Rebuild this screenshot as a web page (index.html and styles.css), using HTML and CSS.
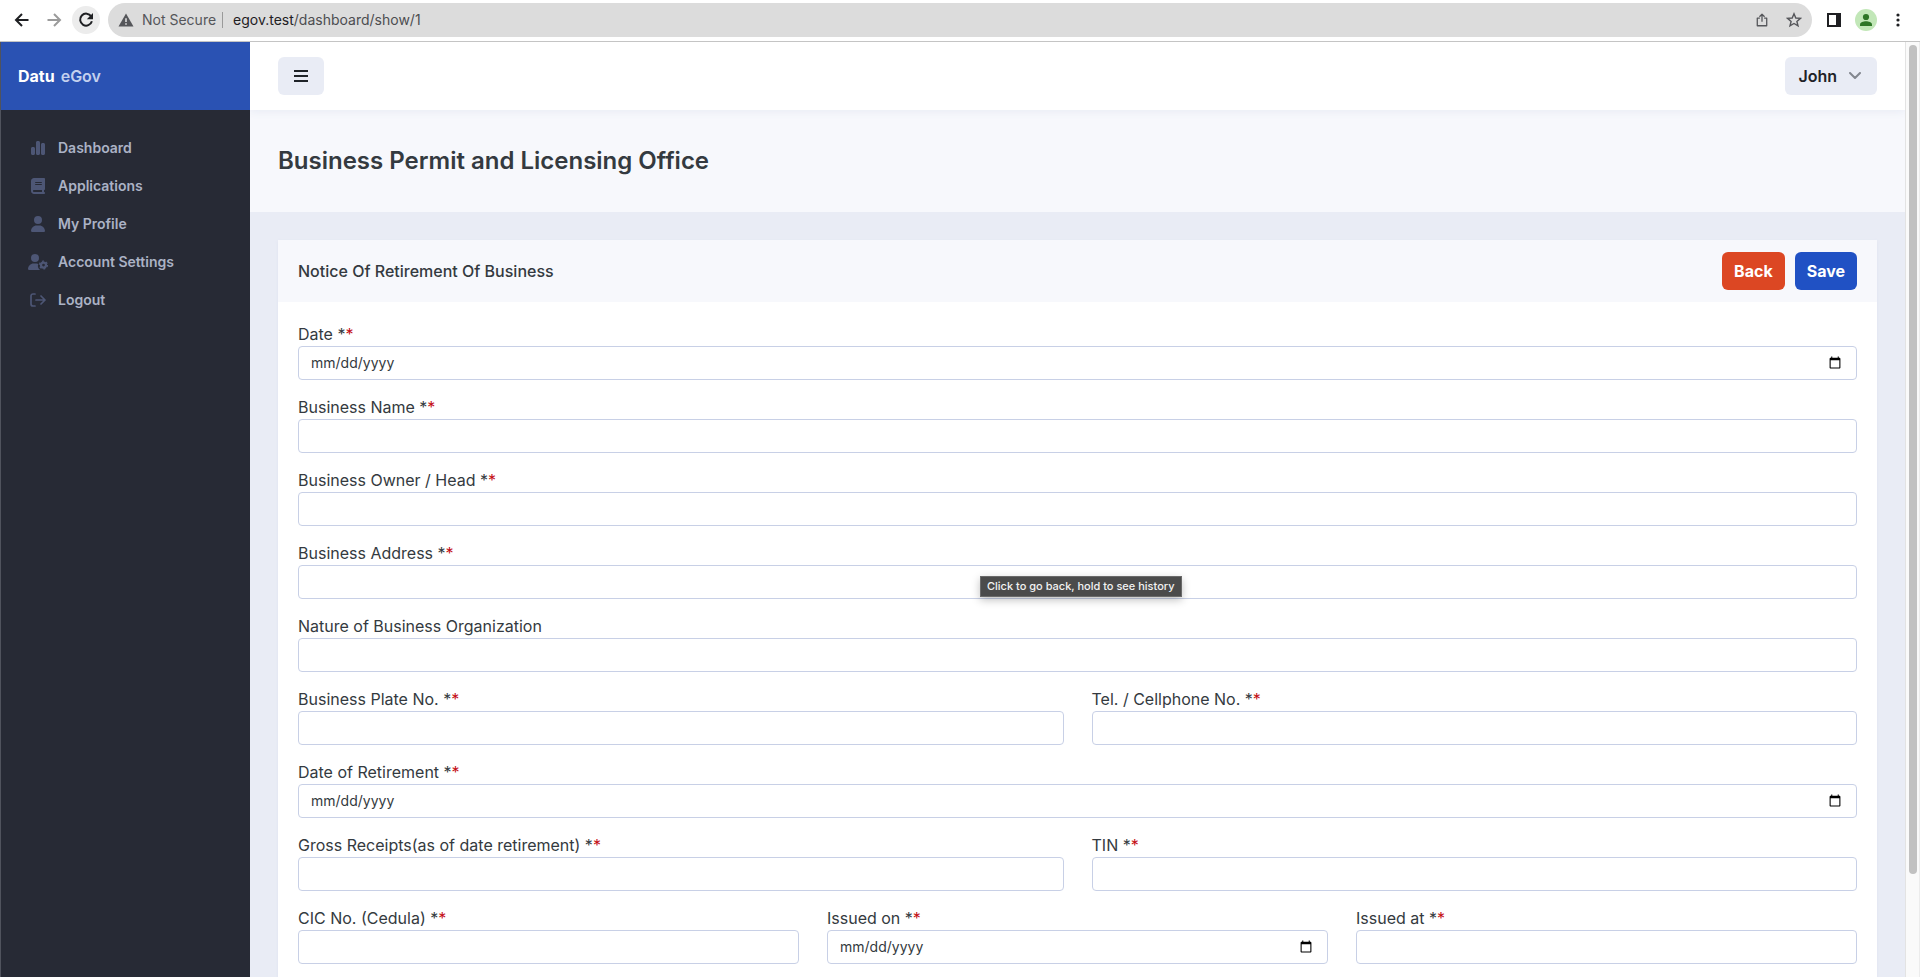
FILE: index.html
```html
<!DOCTYPE html>
<html lang="en">
<head>
<meta charset="utf-8">
<title>Datu eGov</title>
<link rel="stylesheet" href="styles.css">
</head>
<body>
<div class="browser-bar">
  <button class="nav-btn" aria-label="Back"><svg width="16" height="16" viewBox="0 0 16 16"><path d="M14.500 8H2M8 2L2 8l6 6" fill="none" stroke="#1f2023" stroke-width="2"/></svg></button>
  <button class="nav-btn" aria-label="Forward"><svg width="16" height="16" viewBox="0 0 16 16"><path d="M1.500 8H14M8 2l6 6-6 6" fill="none" stroke="#9b9b9b" stroke-width="2"/></svg></button>
  <button class="nav-btn nav-btn-hover" aria-label="Reload"><svg width="16" height="16" viewBox="0 0 16 16"><path d="M13.200 4.400A6 6 0 1 0 13.900 9.300" fill="none" stroke="#1f2023" stroke-width="2"/><path d="M15 1v6.200H8.800z" fill="#1f2023"/></svg></button>
  <div class="address">
    <svg width="16" height="14" viewBox="0 0 16 14"><path d="M8 .5L15.500 13.500H.5z" fill="#55565a"/><path d="M7.200 5.300h1.600v3.700H7.200zM7.200 10.200h1.600v1.600H7.200z" fill="#dcdcdc"/></svg>
    <span class="security">Not Secure</span>
    <span class="url"><span class="host">egov.test</span>/dashboard/show/1</span>
    <button class="bar-icon" aria-label="Share"><svg width="12" height="14" viewBox="0 0 14 16"><path d="M4.500 5.700H1.500v9h11V5.700H9.500M7 10V1.500M4 4.200l3-3 3 3" fill="none" stroke="#55565a" stroke-width="1.500" stroke-linejoin="round"/></svg></button>
    <button class="bar-icon" aria-label="Bookmark"><svg width="16" height="16" viewBox="0 0 16 16"><path d="M8 1.800l1.800 4.200 4.600.4-3.500 3 1.100 4.500L8 11.500l-4 2.400 1.100-4.500-3.500-3 4.600-.4z" fill="none" stroke="#55565a" stroke-width="1.400"/></svg></button>
  </div>
  <div class="bar-tools">
    <button class="bar-icon" aria-label="Side panel"><svg width="14" height="14" viewBox="0 0 14 14"><path d="M1 1h12v12H1z" fill="#fff" stroke="#1f2023" stroke-width="2"/><path d="M9 0h5v14H9z" fill="#1f2023"/></svg></button>
    <button class="bar-icon" aria-label="Profile"><svg width="22" height="22" viewBox="0 0 22 22"><circle cx="11" cy="11" r="11" fill="#c2e7b8"/><circle cx="11" cy="8" r="3.100" fill="#2e7626"/><path d="M5 17v-1.500c0-2.300 3.500-3.300 6-3.300s6 1 6 3.300V17z" fill="#2e7626"/></svg></button>
    <button class="bar-icon" aria-label="Menu"><svg width="16" height="16" viewBox="0 0 16 16" fill="#1f2023"><circle cx="8" cy="3" r="1.600"/><circle cx="8" cy="8" r="1.600"/><circle cx="8" cy="13" r="1.600"/></svg></button>
  </div>
</div>

<div class="app">
  <aside class="sidebar">
    <a class="brand" href="#"><span>Datu</span> <span class="brand-sub">eGov</span></a>
    <nav class="menu">
      <a href="#"><span class="menu-icon"><svg width="14" height="16" viewBox="0 0 448 512"><path d="M160 80c0-26.500 21.500-48 48-48h32c26.500 0 48 21.500 48 48V432c0 26.500-21.500 48-48 48H208c-26.500 0-48-21.500-48-48V80zM0 272c0-26.500 21.500-48 48-48H80c26.500 0 48 21.500 48 48V432c0 26.500-21.500 48-48 48H48c-26.500 0-48-21.500-48-48V272zM368 96h32c26.500 0 48 21.500 48 48V432c0 26.500-21.500 48-48 48H368c-26.500 0-48-21.500-48-48V144c0-26.500 21.500-48 48-48z"/></svg></span>Dashboard</a>
      <a href="#"><span class="menu-icon"><svg width="14" height="16" viewBox="0 0 448 512"><path d="M96 0C43 0 0 43 0 96V416c0 53 43 96 96 96H384h32c17.700 0 32-14.300 32-32s-14.300-32-32-32V384c17.700 0 32-14.300 32-32V32c0-17.700-14.300-32-32-32H384 96zm0 384H352v64H96c-17.700 0-32-14.300-32-32s14.300-32 32-32zm32-240c0-8.800 7.200-16 16-16H336c8.800 0 16 7.200 16 16s-7.200 16-16 16H144c-8.800 0-16-7.200-16-16zm16 48H336c8.800 0 16 7.200 16 16s-7.200 16-16 16H144c-8.800 0-16-7.200-16-16s7.200-16 16-16z"/></svg></span>Applications</a>
      <a href="#"><span class="menu-icon"><svg width="14" height="16" viewBox="0 0 448 512"><path d="M224 256A128 128 0 1 0 224 0a128 128 0 1 0 0 256zm-45.700 48C79.800 304 0 383.800 0 482.300C0 498.700 13.300 512 29.700 512H418.300c16.400 0 29.700-13.300 29.700-29.700C448 383.800 368.200 304 269.700 304H178.300z"/></svg></span>My Profile</a>
      <a href="#"><span class="menu-icon"><svg width="20" height="16" viewBox="0 0 640 512"><path d="M224 256A128 128 0 1 0 224 0a128 128 0 1 0 0 256zm-45.700 48C79.800 304 0 383.800 0 482.300C0 498.700 13.300 512 29.700 512H392c-30-22-62-60-72-100-8-36 0-72 18-92-20-10-44-16-68-16z"/><circle cx="496" cy="352" r="80" fill="none" stroke="#4d5675" stroke-width="72"/><circle cx="496" cy="352" r="124" fill="none" stroke="#4d5675" stroke-width="44" stroke-dasharray="65 65"/></svg></span>Account Settings</a>
      <a href="#"><span class="menu-icon"><svg width="16" height="16" viewBox="0 0 16 16"><path d="M5 2H3a2 2 0 0 0-2 2v8a2 2 0 0 0 2 2h2M6 8h9M11 4l4 4-4 4" fill="none" stroke="#4d5675" stroke-width="1.700" stroke-linecap="round" stroke-linejoin="round"/></svg></span>Logout</a>
    </nav>
  </aside>

  <div class="page">
    <header class="topbar">
      <button class="btn btn-alt" aria-label="Toggle sidebar"><svg width="14" height="16" viewBox="0 0 14 16"><path d="M0 3h14M0 8h14M0 13h14" stroke="#1f2328" stroke-width="2"/></svg></button>
      <button class="btn btn-alt btn-user">John <svg width="12" height="8" viewBox="0 0 12 8"><path d="M1 1l5 5 5-5" fill="none" stroke="#83878f" stroke-width="2" stroke-linecap="round" stroke-linejoin="round"/></svg></button>
    </header>
    <div class="hero"><h1>Business Permit and Licensing Office</h1></div>
    <main class="content">
      <form class="card">
        <div class="card-header">
          <h2>Notice Of Retirement Of Business</h2>
          <button type="button" class="btn btn-danger">Back</button>
          <button type="button" class="btn btn-primary">Save</button>
        </div>
        <div class="card-body">
          <div class="row"><div class="field"><label for="date">Date *<span class="req">*</span></label><input id="date" type="date"></div></div>
          <div class="row"><div class="field"><label for="name">Business Name *<span class="req">*</span></label><input id="name" type="text"></div></div>
          <div class="row"><div class="field"><label for="owner">Business Owner / Head *<span class="req">*</span></label><input id="owner" type="text"></div></div>
          <div class="row"><div class="field"><label for="address">Business Address *<span class="req">*</span></label><input id="address" type="text"></div></div>
          <div class="row"><div class="field"><label for="nature">Nature of Business Organization</label><input id="nature" type="text"></div></div>
          <div class="row">
            <div class="field"><label for="plate">Business Plate No. *<span class="req">*</span></label><input id="plate" type="text"></div>
            <div class="field"><label for="tel">Tel. / Cellphone No. *<span class="req">*</span></label><input id="tel" type="text"></div>
          </div>
          <div class="row"><div class="field"><label for="retired">Date of Retirement *<span class="req">*</span></label><input id="retired" type="date"></div></div>
          <div class="row">
            <div class="field"><label for="gross">Gross Receipts(as of date retirement) *<span class="req">*</span></label><input id="gross" type="text"></div>
            <div class="field"><label for="tin">TIN *<span class="req">*</span></label><input id="tin" type="text"></div>
          </div>
          <div class="row">
            <div class="field"><label for="cic">CIC No. (Cedula) *<span class="req">*</span></label><input id="cic" type="text"></div>
            <div class="field"><label for="issued-on">Issued on *<span class="req">*</span></label><input id="issued-on" type="date"></div>
            <div class="field"><label for="issued-at">Issued at *<span class="req">*</span></label><input id="issued-at" type="text"></div>
          </div>
        </div>
      </form>
    </main>
  </div>
  <div class="scrollbar"><div class="thumb"></div></div>
</div>
<div class="tooltip" role="tooltip">Click to go back, hold to see history</div>
</body>
</html>
```
FILE: styles.css
```css
* { box-sizing: border-box; }
body {
  margin: 0;
  height: 100vh;
  overflow: hidden;
  display: flex;
  flex-direction: column;
  font-family: Inter, "Liberation Sans", sans-serif;
  font-size: 16px;
  line-height: 24px;
  color: #343a40;
  background: #fff;
}
button { font: inherit; border: 0; padding: 0; background: none; cursor: pointer; }
a { text-decoration: none; }
svg { display: block; flex: none; }

.browser-bar {
  flex: none;
  display: flex;
  align-items: center;
  height: 42px;
  padding: 0 14px 2px 8px;
  border-bottom: 1px solid #c4c4c4;
  font-size: 14px;
}
.nav-btn {
  width: 28px;
  height: 28px;
  margin-right: 4px;
  border-radius: 50%;
  display: grid;
  place-items: center;
}
.nav-btn-hover { background: #ececec; margin-right: 8px; }
.address {
  flex: 1;
  height: 34px;
  border-radius: 17px;
  background: #dcdcdc;
  display: flex;
  align-items: center;
  padding: 0 2px 0 10px;
}
.security {
  margin-left: 8px;
  padding-right: 6px;
  border-right: 1px solid #9a9a9a;
  line-height: 16px;
  color: #55565a;
}
.url { flex: 1; margin-left: 10px; color: #4c4d50; }
.host { color: #1f2023; }
.bar-icon {
  width: 32px;
  height: 32px;
  display: grid;
  place-items: center;
}
.bar-tools { display: flex; padding-left: 6px; margin-right: -8px; }

.app { flex: 1; min-height: 0; display: flex; }

.sidebar { flex: none; width: 250px; background: #272a35; border-left: 1px solid #50535d; }
.brand {
  display: flex;
  align-items: center;
  gap: 6px;
  height: 68px;
  padding: 0 17px;
  background: #2a52b3;
  color: #fff;
  font-weight: 700;
}
.brand-sub { color: #c3d0ee; font-weight: 600; }
.menu { padding: 19px 0; }
.menu a {
  display: flex;
  align-items: center;
  height: 38px;
  padding-left: 27px;
  gap: 10px;
  color: #abb2c5;
  font-size: 14px;
  font-weight: 600;
}
.menu-icon { width: 20px; display: grid; place-items: center; fill: #4d5675; }

.page { flex: 1; min-width: 0; overflow: hidden; display: flex; flex-direction: column; background: #e9ecf5; }
.topbar {
  flex: none;
  position: relative;
  display: flex;
  justify-content: space-between;
  align-items: center;
  height: 68px;
  padding: 0 28px;
  background: #fff;
  box-shadow: 0 2px 8px #e9ecf5;
}
.btn {
  height: 38px;
  padding: 0 12px;
  border-radius: 6px;
  font-weight: 700;
  color: #fff;
}
.btn-alt { background: #e9ecf5; color: #1f2328; padding: 0 16px; }
.btn-user { display: flex; align-items: center; gap: 12px; padding: 0 16px 0 13px; font-weight: 600; }
.btn-danger { background: #dc4723; }
.btn-primary { background: #2051c4; }

.hero { flex: none; height: 102px; padding: 38px 28px; background: #f7f8fc; }
h1 { margin: 0; font-size: 24px; line-height: 26px; font-weight: 600; }

.content { padding: 28px; }
.card { background: #fff; box-shadow: 0 1px 3px #dfe3ef; min-height: 900px; }
.card-header {
  display: flex;
  align-items: center;
  gap: 10px;
  height: 62px;
  padding: 0 20px;
  background: #f7f8fc;
}
h2 { flex: 1; margin: 0; font-size: 16px; font-weight: 500; }
.card-body { display: flex; flex-direction: column; gap: 15px; padding: 20px; }
.row { display: flex; gap: 28px; }
.field { flex: 1 1 0; min-width: 0; display: flex; flex-direction: column; }
.field input {
  width: 100%;
  height: 34px;
  padding: 0 12px;
  border: 1px solid #c8d0e6;
  border-radius: 4px;
  background: #fff;
  color: #343a40;
  font: inherit;
  font-size: 14px;
}
.field input::-webkit-datetime-edit-month-field,
.field input::-webkit-datetime-edit-day-field,
.field input::-webkit-datetime-edit-year-field { padding: 0; }
.req { color: #c40d14; }

.scrollbar {
  flex: none;
  width: 15px;
  padding: 3px 2px 0 3px;
  background: #fafafa;
  border-left: 1px solid #e3e3e3;
  border-right: 1px solid #ececec;
}
.thumb { width: 8px; height: 89%; border-radius: 4px; background: #c1c1c1; }

.tooltip {
  position: absolute;
  left: 980px;
  top: 576px;
  padding: 0 6px;
  border: 1px solid #6a6a6a;
  background: #4b4b4b;
  color: #f2f2f2;
  font-size: 11px;
  line-height: 19px;
  font-weight: 500;
  box-shadow: 0 3px 8px rgba(0, 0, 0, 0.25);
}
```
